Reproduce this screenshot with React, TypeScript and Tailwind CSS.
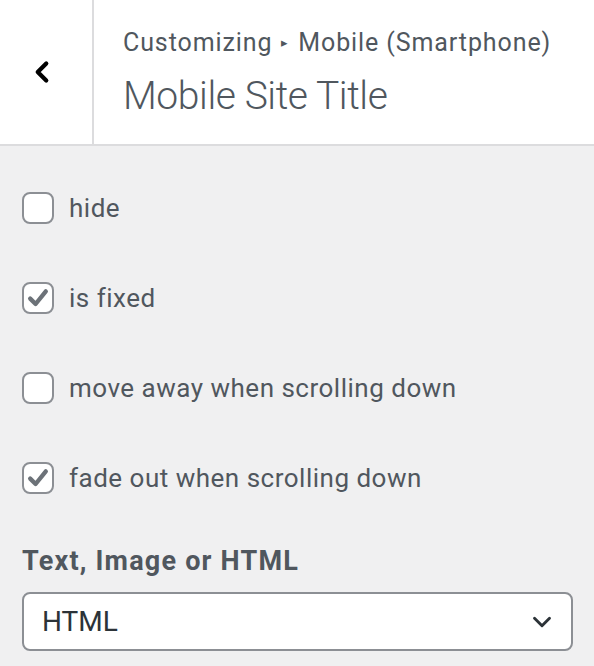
import { ChevronLeft, ChevronDown } from "lucide-react";

const options = [
  { label: "hide", checked: false },
  { label: "is fixed", checked: true },
  { label: "move away when scrolling down", checked: false },
  { label: "fade out when scrolling down", checked: true },
];

export default function App() {
  return (
    <div className="w-[594px] h-[666px] bg-[#f0f0f1] overflow-hidden font-['Roboto',_'Liberation_Sans',_sans-serif] text-[#50575e]">
      {/* Header */}
      <div className="flex h-[146px] bg-white border-b-2 border-[#dcdcde]">
        <div className="w-[94px] flex items-center justify-center border-r-2 border-[#dcdcde] pr-[8px]">
          <ChevronLeft className="w-[34px] h-[34px] text-black" strokeWidth={3} />
        </div>
        <div className="flex flex-col pl-[29px] pt-[26px]">
          <div className="text-[25px] leading-[34px] tracking-[0.9px] flex items-center">
            Customizing
            <span className="text-[13px] mx-[9px]">▸</span>
            Mobile (Smartphone)
          </div>
          <div className="text-[39px] font-light leading-[52px] tracking-[-0.4px] mt-[10px]">Mobile Site Title</div>
        </div>
      </div>

      {/* Controls */}
      <div className="px-[22px] pt-[46px] flex flex-col">
        <div className="flex flex-col gap-[58px]">
          {options.map((o, i) => (
            <label key={i} className="flex items-center gap-[15px]">
              <span className="w-[32px] h-[32px] rounded-[8px] border-2 border-[#8c8f94] bg-white flex items-center justify-center">
                {o.checked && (
                  <svg viewBox="0 0 20 20" className="w-[24px] h-[24px]">
                    <path d="M3.5 10.5 L8 15 L16.5 4.5" fill="none" stroke="#6c7278" strokeWidth="3.6" strokeLinecap="round" strokeLinejoin="round" />
                  </svg>
                )}
              </span>
              <span className="text-[26px] leading-[32px] tracking-[0.5px]">{o.label}</span>
            </label>
          ))}
        </div>
        <div className="mt-[50px] text-[27px] font-bold leading-[34px] tracking-[1.2px]">Text, Image or HTML</div>
        <div className="mt-[14px] h-[59px] w-[551px] bg-white border-2 border-[#8c8f94] rounded-[8px] flex items-center justify-between pl-[18px] pr-[14px]">
          <span className="text-[28px] text-[#2c3338]">HTML</span>
          <ChevronDown className="w-[30px] h-[30px] text-[#2c3338]" strokeWidth={2.3} />
        </div>
      </div>
    </div>
  );
}
